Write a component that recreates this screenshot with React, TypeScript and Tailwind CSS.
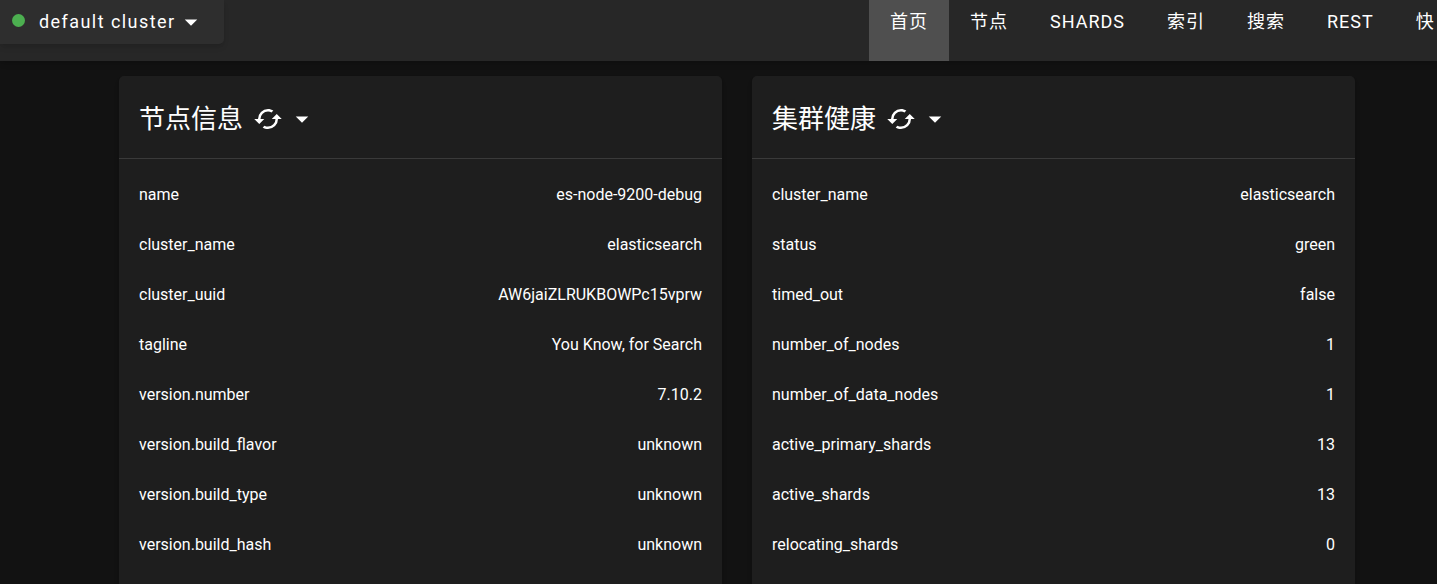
import React from "react";

type Row = { label: string; value: string };

const tabs = ["首页", "节点", "SHARDS", "索引", "搜索", "REST", "快"];

const nodeInfo: Row[] = [
  { label: "name", value: "es-node-9200-debug" },
  { label: "cluster_name", value: "elasticsearch" },
  { label: "cluster_uuid", value: "AW6jaiZLRUKBOWPc15vprw" },
  { label: "tagline", value: "You Know, for Search" },
  { label: "version.number", value: "7.10.2" },
  { label: "version.build_flavor", value: "unknown" },
  { label: "version.build_type", value: "unknown" },
  { label: "version.build_hash", value: "unknown" },
];

const clusterHealth: Row[] = [
  { label: "cluster_name", value: "elasticsearch" },
  { label: "status", value: "green" },
  { label: "timed_out", value: "false" },
  { label: "number_of_nodes", value: "1" },
  { label: "number_of_data_nodes", value: "1" },
  { label: "active_primary_shards", value: "13" },
  { label: "active_shards", value: "13" },
  { label: "relocating_shards", value: "0" },
];

function Caret() {
  return (
    <svg viewBox="0 0 24 24" className="size-[30px] shrink-0" fill="currentColor" aria-hidden="true">
      <path d="M7,10L12,15L17,10H7Z" />
    </svg>
  );
}

function Reload() {
  return (
    <svg viewBox="0 0 24 24" className="size-[30px] shrink-0" fill="currentColor" aria-hidden="true">
      <path d="M19,8L15,12H18A6,6 0 0,1 12,18C11,18 10.03,17.75 9.2,17.3L7.74,18.76C8.97,19.54 10.43,20 12,20A8,8 0 0,0 20,12H23M6,12A6,6 0 0,1 12,6C13,6 13.97,6.25 14.8,6.7L16.26,5.24C15.03,4.46 13.57,4 12,4A8,8 0 0,0 4,12H1L5,16L9,12" />
    </svg>
  );
}

function Card({ title, rows }: { title: string; rows: Row[] }) {
  return (
    <section className="min-w-0 flex-1 rounded-[5px] bg-[#1e1e1e] pb-5 shadow-md">
      <header className="flex h-[83px] items-center border-b border-[#3a3a3a] px-5 pt-[3px]">
        <h2 className="text-[26px] leading-8">{title}</h2>
        <button type="button" aria-label={`${title} reload`} className="ml-2.5">
          <Reload />
        </button>
        <button type="button" aria-label={`${title} options`} className="ml-1">
          <Caret />
        </button>
      </header>
      <table className="mt-[11px] w-full">
        <tbody>
          {rows.map((row) => (
            <tr key={row.label} className="h-[50px]">
              <th scope="row" className="pl-5 text-left font-normal">
                {row.label}
              </th>
              <td className="pr-5 text-right">{row.value}</td>
            </tr>
          ))}
        </tbody>
      </table>
    </section>
  );
}

export default function App() {
  return (
    <div className="h-screen overflow-hidden bg-[#121212] font-['Roboto','Noto_Sans_CJK_SC',sans-serif] text-base text-white">
      <div className="flex items-start justify-between bg-[#272727] shadow-md">
        <button
          type="button"
          className="flex h-11 shrink-0 items-center rounded-br-[5px] bg-[#2e2e2e] pb-px pl-3 pr-[18px] text-[18px] tracking-[0.08em] shadow-md"
        >
          <span className="mb-0.5 mr-[14px] size-[13px] rounded-full bg-[#4caf50]" />
          default cluster
          <Caret />
        </button>
        <nav className="flex w-[568px] shrink-0 overflow-hidden">
          {tabs.map((tab, index) => (
            <a
              key={tab}
              href="#"
              aria-current={index === 0 ? "page" : undefined}
              className={`h-[61px] shrink-0 px-[21px] text-[18px] leading-[44px] tracking-[1px] ${
                index === 0 ? "bg-[#4f4f4f]" : ""
              }`}
            >
              {tab}
            </a>
          ))}
        </nav>
      </div>
      <main className="flex gap-[30px] pl-[119px] pr-[82px] pt-[15px]">
        <Card title="节点信息" rows={nodeInfo} />
        <Card title="集群健康" rows={clusterHealth} />
      </main>
    </div>
  );
}
